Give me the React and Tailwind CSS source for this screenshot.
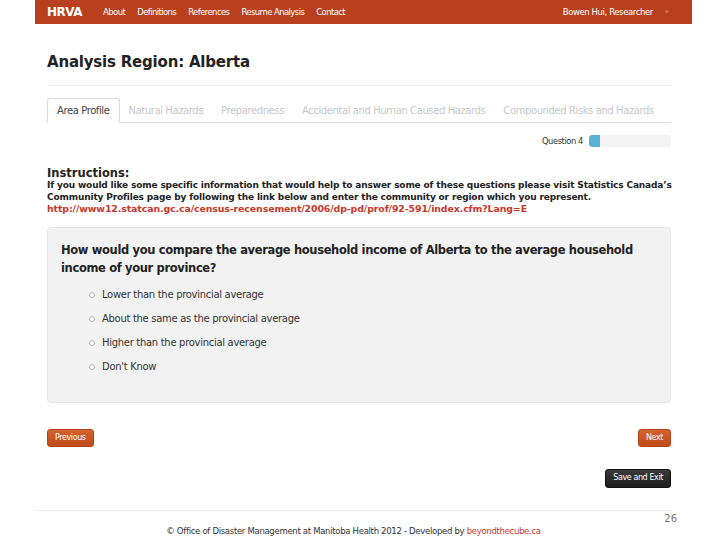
import React from "react";

const sans = { fontFamily: '"DejaVu Sans", Verdana, sans-serif' };

function App() {
  const tabs = ["Natural Hazards", "Preparedness", "Accidental and Human Caused Hazards", "Compounded Risks and Hazards"];
  const options = [
    "Lower than the provincial average",
    "About the same as the provincial average",
    "Higher than the provincial average",
    "Don't Know",
  ];

  return (
    <div className="w-[720px] h-[540px] bg-white overflow-hidden" style={sans}>
      {/* 상단 네비게이션 */}
      <div className="ml-[35px] w-[657px] h-[24px] bg-[#b9401f] flex items-center px-3 text-white">
        <span className="font-bold text-[12px] tracking-[-0.5px]">HRVA</span>
        <div className="flex gap-[12px] ml-[21px] text-[8.5px] tracking-[-0.6px]">
          <span>About</span>
          <span>Definitions</span>
          <span>References</span>
          <span>Resume Analysis</span>
          <span>Contact</span>
        </div>
        <div className="ml-auto flex items-center gap-3 text-[8.5px] tracking-[-0.4px] mr-[12px]">
          <span>Bowen Hui, Researcher</span>
          <span className="text-[#d77a5f] text-[7px]">▾</span>
        </div>
      </div>

      <div className="mx-[47px] w-[624px]">
        <h1 className="mt-[28px] text-[15px] font-bold text-[#222] tracking-[-0.2px] leading-[20px]">
          Analysis Region: Alberta
        </h1>
        <div className="mt-[13px] border-t border-[#eee]" />

        {/* 탭 */}
        <div className="mt-[12px] flex border-b border-[#ddd] h-[25px] text-[10px] tracking-[-0.4px]">
          <div className="px-[9px] border border-[#ddd] border-b-white rounded-t-[3px] -mb-px bg-white text-[#444] flex items-center">
            Area Profile
          </div>
          {tabs.map((t) => (
            <div key={t} className="px-[9px] text-[#c8c8c8] flex items-center">
              {t}
            </div>
          ))}
        </div>

        {/* 진행 표시 */}
        <div className="mt-[12px] flex justify-end items-center gap-[6px]">
          <span className="text-[8.3px] text-[#333] tracking-[-0.4px]">Question 4</span>
          <div className="w-[82px] h-[12px] bg-[#f3f3f3] rounded-[3px] overflow-hidden">
            <div className="w-[11px] h-full bg-[#5bb0d8] rounded-l-[3px]" />
          </div>
        </div>

        {/* 안내 */}
        <div className="mt-[19px]">
          <div className="text-[11.5px] font-bold text-[#222] leading-[14px]">Instructions:</div>
          <p className="w-[632px] text-[9px] font-bold text-[#222] leading-[11.5px] tracking-[-0.15px]">
            If you would like some specific information that would help to answer some of these questions please visit Statistics Canada’s Community Profiles page by following the link below and enter the community or region which you represent.
          </p>
          <div className="text-[9.4px] font-bold text-[#c9382a] leading-[11.5px] tracking-[-0.1px]">
            http://www12.statcan.gc.ca/census-recensement/2006/dp-pd/prof/92-591/index.cfm?Lang=E
          </div>
        </div>

        {/* 질문 박스 */}
        <div className="mt-[12px] h-[176px] bg-[#f2f2f2] border border-[#e5e5e5] rounded-[4px] px-[13px] pt-[13px]">
          <div className="text-[11.5px] font-bold text-[#222] leading-[18px] tracking-[-0.35px]">
            How would you compare the average household income of Alberta to the average household income of your province?
          </div>
          <div className="mt-[11px] ml-[28px] flex flex-col gap-[10px]">
            {options.map((o) => (
              <div key={o} className="flex items-center h-[14px]">
                <span className="w-[6px] h-[6px] rounded-full border border-[#b5b5b5] bg-white" />
                <span className="ml-[7px] text-[10px] text-[#333] tracking-[-0.3px]">{o}</span>
              </div>
            ))}
          </div>
        </div>

        {/* 버튼 */}
        <div className="mt-[26px] flex justify-between">
          <button className="h-[18px] px-[7px] text-[8px] text-white tracking-[-0.4px] rounded-[3px] bg-gradient-to-b from-[#d4622b] to-[#bf4a1c] border border-[#b4441c]">
            Previous
          </button>
          <button className="h-[18px] px-[7px] text-[8px] text-white tracking-[-0.4px] rounded-[3px] bg-gradient-to-b from-[#d4622b] to-[#bf4a1c] border border-[#b4441c]">
            Next
          </button>
        </div>
        <div className="mt-[22px] flex justify-end">
          <button className="h-[19px] px-[7px] text-[8px] text-white tracking-[-0.4px] rounded-[3px] bg-gradient-to-b from-[#3a3a3a] to-[#1e1e1e] border border-[#111]">
            Save and Exit
          </button>
        </div>
      </div>

      {/* 푸터 */}
      <div className="mx-[35px] w-[637px] mt-[22px] border-t border-[#eee]" />
      <div className="relative mx-[35px] w-[637px]">
        <span className="absolute right-[-5px] top-[0px] text-[10px] text-[#777]">26</span>
        <div className="pt-[14px] text-center text-[8.5px] text-[#333] tracking-[-0.3px]">
          © Office of Disaster Management at Manitoba Health 2012 - Developed by{" "}
          <span className="text-[#c9382a]">beyondthecube.ca</span>
        </div>
      </div>
    </div>
  );
}

export default App;
